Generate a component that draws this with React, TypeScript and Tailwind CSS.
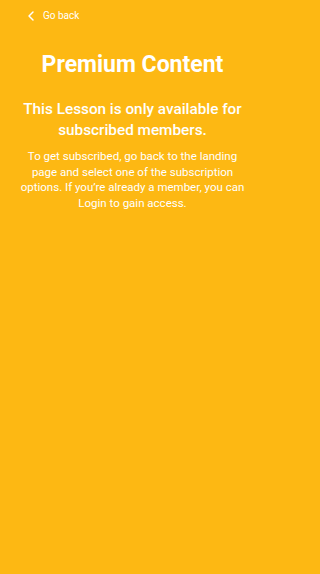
import { ChevronLeft } from 'lucide-react'

export default function App() {
  return (
    <div className="min-h-[574px] w-full bg-[#FDB813] text-white font-['Roboto',sans-serif]">
      <div className="w-[265px]">
        <div className="flex items-center gap-[4px] pl-[23px] pt-[8px] h-[16px] box-content">
          <ChevronLeft className="h-[16px] w-[16px]" strokeWidth={2.2} />
          <span className="text-[10px] leading-none">Go back</span>
        </div>
        <h1 className="mt-[26px] text-center text-[23px] font-bold leading-[30px]">Premium Content</h1>
        <h2 className="mt-[19px] px-[12px] text-center text-[15.3px] font-medium leading-[21px]">
          This Lesson is only available for subscribed members.
        </h2>
        <p className="mt-[8px] px-[18px] text-center text-[11.5px] leading-[15.7px]">
          To get subscribed, go back to the landing page and select one of the subscription options. If
          you’re already a member, you can Login to gain access.
        </p>
      </div>
    </div>
  )
}
